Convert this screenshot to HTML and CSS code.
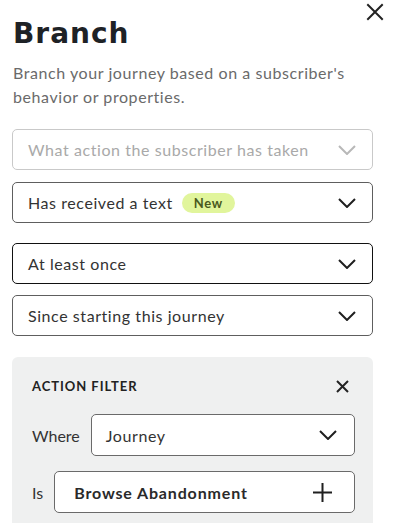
FILE: index.html
```html
<!DOCTYPE html>
<html lang="en">
<head>
<meta charset="utf-8">
<title>Branch</title>
<link rel="stylesheet" href="styles.css">
</head>
<body>
<div class="sheet">
  <header class="sheet-header">
    <h1 class="title">Branch</h1>
    <button class="close" aria-label="Close">
      <svg width="18" height="18" viewBox="0 0 18 18"><path d="M2 2 L16 16 M16 2 L2 16" stroke="#232323" stroke-width="2" fill="none" stroke-linecap="square"/></svg>
    </button>
  </header>
  <p class="desc">Branch your journey based on a subscriber's behavior or properties.</p>

  <div class="select select-placeholder gap-12">
    <span class="select-text">What action the subscriber has taken</span>
    <svg class="chev" width="18" height="10" viewBox="0 0 18 10"><polyline points="1,1 9,9 17,1" fill="none" stroke="#b8b8b8" stroke-width="2"/></svg>
  </div>
  <div class="select gap-20">
    <span class="select-text">Has received a text <span class="badge">New</span></span>
    <svg class="chev" width="18" height="10" viewBox="0 0 18 10"><polyline points="1,1 9,9 17,1" fill="none" stroke="#1f1f1f" stroke-width="2"/></svg>
  </div>
  <div class="select select-active gap-11">
    <span class="select-text">At least once</span>
    <svg class="chev" width="18" height="10" viewBox="0 0 18 10"><polyline points="1,1 9,9 17,1" fill="none" stroke="#1f1f1f" stroke-width="2"/></svg>
  </div>
  <div class="select gap-21">
    <span class="select-text">Since starting this journey</span>
    <svg class="chev" width="18" height="10" viewBox="0 0 18 10"><polyline points="1,1 9,9 17,1" fill="none" stroke="#1f1f1f" stroke-width="2"/></svg>
  </div>

  <section class="filter">
    <div class="filter-head">
      <span class="filter-title">ACTION FILTER</span>
      <svg width="13" height="13" viewBox="0 0 13 13"><path d="M1 1 L12 12 M12 1 L1 12" stroke="#232323" stroke-width="2" fill="none"/></svg>
    </div>
    <div class="filter-row row-where">
      <span class="filter-label">Where</span>
      <div class="select select-small">
        <span class="select-text">Journey</span>
        <svg class="chev" width="18" height="10" viewBox="0 0 18 10"><polyline points="1,1 9,9 17,1" fill="none" stroke="#1f1f1f" stroke-width="2"/></svg>
      </div>
    </div>
    <div class="filter-row">
      <span class="filter-label">Is</span>
      <div class="select select-small select-value">
        <span class="select-text strong">Browse Abandonment</span>
        <svg width="19" height="19" viewBox="0 0 19 19"><path d="M9.5 0 V19 M0 9.5 H19" stroke="#1f1f1f" stroke-width="2" fill="none"/></svg>
      </div>
    </div>
  </section>
</div>
</body>
</html>
```

FILE: styles.css
```css
html, body {
  margin: 0;
  padding: 0;
  height: 523px;
  overflow: hidden;
  background: #ffffff;
}

body {
  font-family: "Lato", "Noto Sans", sans-serif;
  color: #333333;
  letter-spacing: 0.57px;
}

.sheet {
  padding: 0 10px 0 12px;
}

.sheet-header {
  display: flex;
  justify-content: space-between;
  align-items: flex-start;
}

.title {
  margin: 17px 0 0 1px;
  font-family: "DejaVu Sans", sans-serif;
  font-weight: 700;
  font-size: 28px;
  line-height: 34px;
  letter-spacing: 1px;
  color: #1e2226;
}

.close {
  margin: 3px 0 0 0;
  padding: 0;
  border: 0;
  background: none;
  width: 18px;
  height: 18px;
  display: flex;
}

.desc {
  margin: 10px 11px 0 1px;
  font-size: 16px;
  line-height: 24px;
  color: #6a6a6a;
}

.select {
  box-sizing: border-box;
  height: 41px;
  margin-right: 11px;
  border: 1px solid #5e5e5e;
  border-radius: 5px;
  padding: 0 16px 0 15px;
  display: flex;
  align-items: center;
  justify-content: space-between;
  font-size: 16px;
  color: #333333;
  background: #ffffff;
}

.select-placeholder {
  margin-top: 20px;
  border-color: #c9c9c9;
  color: #a9a9a9;
}

.select-active {
  border-color: #111111;
}

.gap-12 { margin-bottom: 12px; }
.gap-20 { margin-bottom: 20px; }
.gap-11 { margin-bottom: 11px; }
.gap-21 { margin-bottom: 21px; }

.select-text {
  display: flex;
  align-items: center;
}

.badge {
  margin-left: 9px;
  height: 20px;
  padding: 0 12px;
  border-radius: 10px;
  background: #e1f59c;
  color: #4a5a20;
  font-weight: 700;
  font-size: 13px;
  line-height: 20px;
  letter-spacing: 0.6px;
}

.filter {
  margin-right: 11px;
  background: #eff0f0;
  border-radius: 6px;
  padding: 21px 18px 20px 20px;
}

.filter-head {
  display: flex;
  justify-content: space-between;
  align-items: center;
  height: 16px;
  padding-right: 6px;
  margin-bottom: 20px;
}

.filter-title {
  font-weight: 700;
  font-size: 13px;
  letter-spacing: 0.95px;
  color: #222222;
}

.filter-row {
  display: flex;
  align-items: center;
  gap: 11px;
}

.row-where {
  margin-bottom: 15px;
}

.filter-label {
  font-size: 16px;
  color: #333333;
  letter-spacing: 0;
}

.select-small {
  flex: 1;
  height: 42px;
  margin-right: 0;
  border-color: #6a6a6a;
  padding: 0 17px 0 14px;
}

.select-value {
  padding: 0 22px 0 19px;
}

.strong {
  font-weight: 700;
  color: #2a2a2a;
  letter-spacing: 0.85px;
}
```
